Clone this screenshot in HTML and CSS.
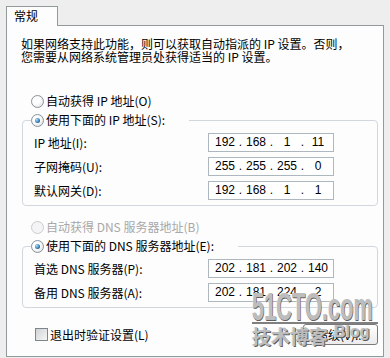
FILE: index.html
```html
<!DOCTYPE html>
<html lang="zh-CN">
<head>
  <meta charset="UTF-8" />
  <title>Internet 协议 (TCP/IP) 属性</title>
  <link rel="stylesheet" href="styles.css">
</head>
<body>

  <div class="dialog">
    <div class="tabs">
      <div class="tab">常规</div>
    </div>

    <div class="pane">
      <p class="intro">如果网络支持此功能，则可以获取自动指派的 IP 设置。否则，<br>您需要从网络系统管理员处获得适当的 IP 设置。</p>

      <div class="option"><span class="radio"></span>自动获得 IP 地址(O)</div>

      <fieldset class="group">
        <legend><span class="option"><span class="radio checked"></span>使用下面的 IP 地址(S):</span></legend>
        <div class="field">
          <span>IP 地址(I):</span>
          <div class="ip"><span class="oct">192</span><span class="dot">.</span><span class="oct">168</span><span class="dot">.</span><span class="oct">1</span><span class="dot">.</span><span class="oct">11</span></div>
        </div>
        <div class="field">
          <span>子网掩码(U):</span>
          <div class="ip"><span class="oct">255</span><span class="dot">.</span><span class="oct">255</span><span class="dot">.</span><span class="oct">255</span><span class="dot">.</span><span class="oct">0</span></div>
        </div>
        <div class="field">
          <span>默认网关(D):</span>
          <div class="ip"><span class="oct">192</span><span class="dot">.</span><span class="oct">168</span><span class="dot">.</span><span class="oct">1</span><span class="dot">.</span><span class="oct">1</span></div>
        </div>
      </fieldset>

      <div class="option option-dns disabled"><span class="radio"></span>自动获得 DNS 服务器地址(B)</div>

      <fieldset class="group">
        <legend><span class="option"><span class="radio checked"></span>使用下面的 DNS 服务器地址(E):</span></legend>
        <div class="field">
          <span>首选 DNS 服务器(P):</span>
          <div class="ip"><span class="oct">202</span><span class="dot">.</span><span class="oct">181</span><span class="dot">.</span><span class="oct">202</span><span class="dot">.</span><span class="oct">140</span></div>
        </div>
        <div class="field">
          <span>备用 DNS 服务器(A):</span>
          <div class="ip"><span class="oct">202</span><span class="dot">.</span><span class="oct">181</span><span class="dot">.</span><span class="oct">224</span><span class="dot">.</span><span class="oct">2</span></div>
        </div>
      </fieldset>

      <div class="footer">
        <label class="option check-row"><span class="check"></span>退出时验证设置(L)</label>
        <button class="btn">高级(V)...</button>
      </div>
    </div>

    <div class="watermark">
      <div class="wm-site">51CTO.com</div>
      <div class="wm-rule"></div>
      <div class="wm-sub"><span class="wm-cn">技术博客</span><span class="wm-blog">Blog</span></div>
    </div>
  </div>

</body>
</html>
```

FILE: styles.css
```css
body {
  margin: 0;
  background: #eeeeee;
  font-family: "Noto Sans CJK SC", sans-serif;
  font-size: 12px;
  color: #000;
}

.dialog {
  position: relative;
  width: 390px;
  height: 358px;
  padding: 6px 0 0 6px;
  box-sizing: border-box;
}

.tabs {
  display: flex;
  height: 19px;
}

.tab {
  position: relative;
  z-index: 1;
  width: 52px;
  height: 20px;
  box-sizing: border-box;
  border: 1px solid #919b9c;
  border-bottom: none;
  background: #fdfdfd;
  padding-left: 7px;
  line-height: 18px;
}

.pane {
  width: 378px;
  height: 332px;
  box-sizing: border-box;
  border: 1px solid #919b9c;
  background: #fdfdfd;
  padding: 11px 5px 0 14px;
}

.intro {
  margin: 0;
  line-height: 13px;
  white-space: nowrap;
}

.option {
  display: flex;
  align-items: center;
  height: 16px;
  line-height: 16px;
  margin: 30px 0 0 10px;
  white-space: nowrap;
}

.option-dns {
  margin-top: 13px;
}

.disabled {
  color: #a8a8a8;
}

.radio {
  position: relative;
  flex: none;
  width: 13px;
  height: 13px;
  box-sizing: border-box;
  margin-right: 2px;
  border: 1px solid #8a949c;
  border-radius: 50%;
  background: radial-gradient(circle at 40% 40%, #fff 0, #fff 35%, #d4d7da 100%);
}

.radio.checked::after {
  content: "";
  position: absolute;
  left: 3px;
  top: 3px;
  width: 5px;
  height: 5px;
  border-radius: 50%;
  background: radial-gradient(circle at 35% 35%, #a8e4ff, #1c5c9c 75%);
}

.disabled .radio {
  border-color: #c8ccd0;
  background: #f4f4f4;
}

.group {
  width: 356px;
  box-sizing: border-box;
  margin: 3px 0 0 1px;
  padding: 0 43px 5px 8px;
  border: 1px solid #d0d7df;
  border-radius: 4px;
}

.group legend {
  padding: 0 24px 0 0;
}

.group legend .option {
  margin: 0;
}

.field {
  display: flex;
  justify-content: space-between;
  align-items: center;
  height: 19px;
  margin-top: 5px;
  padding-left: 3px;
  white-space: nowrap;
}

.ip {
  display: flex;
  width: 126px;
  height: 19px;
  box-sizing: border-box;
  padding-left: 4px;
  border: 1px solid #aeb6be;
  background: #fff;
  font-family: "Liberation Sans", sans-serif;
  font-size: 12px;
  line-height: 17px;
}

.oct {
  width: 24px;
  text-align: center;
}

.dot {
  width: 7px;
  text-align: center;
}

.footer {
  display: flex;
  justify-content: space-between;
  align-items: center;
  margin-top: 16px;
}

.check-row {
  margin: 0 0 0 14px;
}

.check {
  flex: none;
  width: 13px;
  height: 13px;
  box-sizing: border-box;
  margin-right: 2px;
  border: 1px solid #7d868e;
  background: linear-gradient(135deg, #cfd2d4, #f6f6f6);
}

.btn {
  width: 75px;
  height: 21px;
  border: 1px solid #7a7a7a;
  border-radius: 3px;
  background: linear-gradient(#ffffff, #ebebeb);
  font: inherit;
  padding: 0;
}

/* watermark of the source site */
.watermark {
  position: absolute;
  left: 252px;
  top: 291px;
  z-index: 2;
  width: 126px;
  color: #bdbdbd;
  font-weight: bold;
  text-shadow: 1px 1px 0 #5f5f5f, -1px 0 0 #e8e8e8;
  pointer-events: none;
}

.wm-site {
  font-family: "Liberation Sans", sans-serif;
  font-size: 39px;
  line-height: 31px;
  transform: scaleX(0.56);
  transform-origin: left;
  white-space: nowrap;
}

.wm-rule {
  height: 2px;
  background: #808080;
}

.wm-sub {
  display: flex;
  align-items: flex-start;
  white-space: nowrap;
}

.wm-cn {
  font-size: 19px;
  line-height: 23px;
}

.wm-blog {
  margin-left: 6px;
  font-family: "Liberation Sans", sans-serif;
  font-size: 16px;
  line-height: 15px;
}
```
